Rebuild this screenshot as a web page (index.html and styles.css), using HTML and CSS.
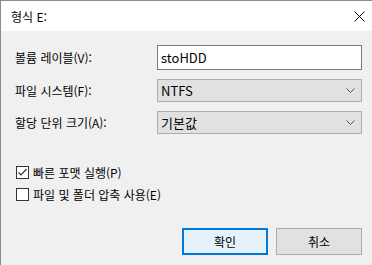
FILE: index.html
```html
<!DOCTYPE html>
<html lang="ko">
<head>
<meta charset="UTF-8">
<meta name="viewport" content="width=device-width, initial-scale=1.0">
<title>형식 E:</title>
<link rel="stylesheet" href="styles.css">
</head>
<body>
<div class="window">
  <!-- title bar -->
  <div class="titlebar">
    <span class="title">형식 E:</span>
    <svg class="close" width="11" height="11" viewBox="0 0 11 11">
      <path d="M0.5 0.5 L10.5 10.5 M10.5 0.5 L0.5 10.5" stroke="#000" stroke-width="1" fill="none"/>
    </svg>
  </div>

  <div class="content">
    <!-- fields -->
    <div class="fields">
      <span class="field-label">볼륨 레이블(V):</span>
      <div class="textbox">stoHDD</div>

      <span class="field-label">파일 시스템(F):</span>
      <div class="select">
        <span>NTFS</span>
        <svg class="chevron" width="9" height="5" viewBox="0 0 9 5"><path d="M0.5 0.5 L4.5 4.5 L8.5 0.5" stroke="#555" fill="none"/></svg>
      </div>

      <span class="field-label">할당 단위 크기(A):</span>
      <div class="select">
        <span>기본값</span>
        <svg class="chevron" width="9" height="5" viewBox="0 0 9 5"><path d="M0.5 0.5 L4.5 4.5 L8.5 0.5" stroke="#555" fill="none"/></svg>
      </div>
    </div>

    <!-- options -->
    <div class="options">
      <div class="option">
        <span class="checkbox">
          <svg width="11" height="11" viewBox="0 0 11 11"><path d="M1.5 5.5 L4 8 L9.5 2" stroke="#333" stroke-width="1.2" fill="none"/></svg>
        </span>
        <span>빠른 포맷 실행(P)</span>
      </div>
      <div class="option">
        <span class="checkbox"></span>
        <span>파일 및 폴더 압축 사용(E)</span>
      </div>
    </div>

    <!-- buttons -->
    <div class="buttons">
      <button type="button" class="btn btn-default">확인</button>
      <button type="button" class="btn">취소</button>
    </div>
  </div>
</div>
</body>
</html>
```

FILE: styles.css
```css
body {
  margin: 0;
  font-family: 'Noto Sans CJK KR', 'Noto Sans', sans-serif;
  font-size: 12px;
  color: #000;
  background-color: #f0f0f0;
}
.window {
  border-left: 1px solid #8c8c8c;
  border-top: 1px solid #8c8c8c;
  height: 264px;
  background-color: #f0f0f0;
}
.titlebar {
  height: 30px;
  background-color: #fff;
  display: flex;
  align-items: center;
  justify-content: space-between;
  padding: 0 7px 0 10px;
}
.title {
  font-size: 12px;
}
.close {
  margin-top: 1px;
}
.content {
  padding: 14px 0 0 14px;
}
.fields {
  display: grid;
  grid-template-columns: 142px 205px;
  grid-template-rows: 25px 23px 23px;
  row-gap: 9px;
  align-items: center;
}
.field-label {
  line-height: 16px;
}
.textbox {
  height: 25px;
  box-sizing: border-box;
  border: 1px solid #7a7a7a;
  background-color: #fff;
  padding: 0 3px;
  display: flex;
  align-items: center;
  font-size: 13px;
}
.select {
  height: 23px;
  box-sizing: border-box;
  border: 1px solid #adadad;
  background-color: #e1e1e1;
  padding: 0 6px 0 3px;
  display: flex;
  align-items: center;
  justify-content: space-between;
  font-size: 13px;
}
.options {
  margin-top: 27px;
}
.option {
  display: flex;
  align-items: center;
  height: 22px;
  gap: 4px;
  margin-left: 1px;
}
.checkbox {
  width: 13px;
  height: 13px;
  box-sizing: border-box;
  border: 1px solid #333;
  background-color: #fff;
  display: flex;
  align-items: center;
  justify-content: center;
}
.buttons {
  display: flex;
  justify-content: flex-end;
  gap: 8px;
  margin-top: 23px;
  padding-right: 10px;
}
.btn {
  width: 86px;
  height: 27px;
  border: 1px solid #adadad;
  background-color: #e1e1e1;
  font-family: inherit;
  font-size: 12px;
  color: #000;
  padding: 0;
}
.btn-default {
  border: 2px solid #0078d7;
  background-color: #e5f1fb;
}
```
